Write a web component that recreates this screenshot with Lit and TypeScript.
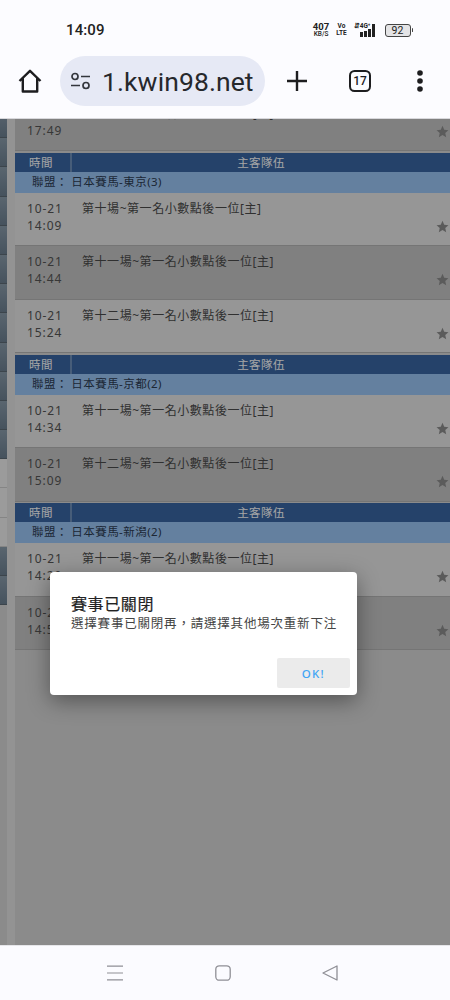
import { LitElement, html, css, svg } from "lit";
import { customElement } from "lit/decorators.js";

const FONT = `"Noto Sans", "Noto Sans CJK TC", sans-serif`;

const groups = [
  {
    league: "日本賽馬-東京(3)",
    rows: [
      ["10-21", "14:09", "第十場~第一名小數點後一位[主]"],
      ["10-21", "14:44", "第十一場~第一名小數點後一位[主]"],
      ["10-21", "15:24", "第十二場~第一名小數點後一位[主]"],
    ],
  },
  {
    league: "日本賽馬-京都(2)",
    rows: [
      ["10-21", "14:34", "第十一場~第一名小數點後一位[主]"],
      ["10-21", "15:09", "第十二場~第一名小數點後一位[主]"],
    ],
  },
  {
    league: "日本賽馬-新潟(2)",
    rows: [
      ["10-21", "14:29", "第十一場~第一名小數點後一位[主]"],
      ["10-21", "14:59", "第十二場~第一名小數點後一位[主]"],
    ],
  },
];

const sideKinds = [
  ...Array(12).fill("d"),
  ...Array(3).fill("l"),
  ...Array(2).fill("d"),
];

const star = svg`<svg class="star" viewBox="0 0 24 24" width="13" height="13"><path d="M12 1.5l3.2 7.2 7.8.8-5.9 5.2 1.7 7.7L12 18.4l-6.8 4 1.7-7.7L1 9.5l7.8-.8z" fill="currentColor"/></svg>`;

@customElement("app-root")
export class AppRoot extends LitElement {
  static styles = css`
    :host { display: block; width: 450px; height: 1000px; overflow: hidden; font-family: ${css([FONT] as any)}; background: #fcfcff; }
    .screen { display: flex; flex-direction: column; height: 1000px; }
    .status { height: 44px; flex: none; display: flex; align-items: center; padding: 16px 37px 0 66px; box-sizing: border-box; justify-content: space-between; color: #222; background: #fcfcff; position: relative; z-index: 3; }
    .time { font: 500 15px Roboto, sans-serif; letter-spacing: .1px; }
    .sicons { display: flex; align-items: center; gap: 7px; }
    .speed { display: flex; flex-direction: column; align-items: center; font: 700 9.5px/8px Roboto, sans-serif; }
    .speed small { font: 500 6.5px/6px Roboto, sans-serif; }
    .volte { display: flex; flex-direction: column; align-items: center; font: 700 6.5px/7px Roboto, sans-serif; }
    .net { display: flex; align-items: flex-end; height: 14px; gap: 1.5px; }
    .net span { font: 700 6.5px/7px Roboto, sans-serif; align-self: flex-start; margin-right: -12px; margin-left: 0; white-space: nowrap; }
    .net i { display: block; width: 2.5px; background: #222; }
    .batt { display: flex; align-items: center; gap: 1px; margin-left: 3px; }
    .batt b { display: flex; align-items: center; justify-content: center; width: 26px; height: 13px; box-sizing: border-box; border: 1px solid #444; border-radius: 3px; background: #e4e4e6; font: 400 10.5px Roboto, sans-serif; color: #222; }
    .batt u { display: block; width: 1.5px; height: 4px; background: #444; border-radius: 1px; }

    .bar { height: 75px; flex: none; display: flex; align-items: center; box-sizing: border-box; padding-bottom: 0; background: #fcfcff; border-bottom: 1px solid #d8d8dc; position: relative; z-index: 3; color: #1d1d1f; }
    .home { width: 60px; display: flex; justify-content: center; }
    .pill { width: 205px; height: 50px; border-radius: 25px; background: #e6e9f5; display: flex; align-items: center; padding-left: 10px; box-sizing: border-box; gap: 11px; margin-top: 0; }
    .url { font: 400 26.5px Roboto, sans-serif; color: #26282c; letter-spacing: .1px; white-space: nowrap; }
    .plus { width: 66px; margin-left: -1px; display: flex; justify-content: center; }
    .tabs { width: 60px; display: flex; justify-content: center; }
    .tabbox { width: 22px; height: 22px; border: 2.2px solid #1d1d1f; border-radius: 5.5px; box-sizing: border-box; display: flex; align-items: center; justify-content: center; font: 500 12px Roboto, sans-serif; }
    .dots { width: 60px; display: flex; justify-content: center; }

    .page { flex: 1; position: relative; overflow: hidden; background: #d6d6d6; display: flex; min-height: 0; }
    .side { width: 7px; flex: none; margin-top: -10px; display: flex; flex-direction: column; }
    .side div { height: 29.2px; box-sizing: border-box; border-bottom: 1px solid #5c6a76; flex: none; }
    .side .d { background: linear-gradient(#8a9cab, #6c7f90); }
    .side .l { background: #efefef; border-bottom-color: #ccc; }
    .gutter { width: 8px; flex: none; background: #e2e2e2; height: 100%; }
    .main { flex: 1; min-width: 0; margin-top: -21.5px; display: flex; flex-direction: column; gap: 1.5px; }
    .group { display: flex; flex-direction: column; }
    .head { height: 19px; display: flex; background: #3a66a3; color: #fff; font-size: 11.5px; line-height: 19px; letter-spacing: .4px; text-align: center; }
    .head .t { width: 57px; box-sizing: border-box; border-right: 2px solid #6d8fbb; padding-right: 3px; }
    .head .m { flex: 1; padding-right: 0; }
    .league { height: 21px; box-sizing: border-box; background: #9ac5f5; color: #2d3c52; font-size: 11.5px; line-height: 20px; padding-left: 17px; letter-spacing: .45px; white-space: nowrap; }
    .row { height: 53.5px; box-sizing: border-box; position: relative; display: flex; padding: 7px 0 0 12px; color: #555; font-size: 12px; line-height: 17px; letter-spacing: .9px; border-bottom: 1px solid #b4b4b4; white-space: nowrap; }
    .row.even { background: #e6e6e6; }
    .row.odd { background: #c5c5c5; }
    .when { width: 55px; flex: none; }
    .title { letter-spacing: .55px; color: #4a4a4a; }
    .star { position: absolute; right: 1.5px; top: 27px; color: #8d8d8d; }

    .scrim { position: absolute; inset: 0; background: rgba(0,0,0,.35); padding: 453px 0 0 50px; box-sizing: border-box; }
    .dialog { width: 307px; height: 123px; box-sizing: border-box; background: #fff; border-radius: 4px; box-shadow: 0 6px 22px rgba(0,0,0,.4); padding: 21px 7px 7px 21px; display: flex; flex-direction: column; }
    .dialog h2 { margin: 0; font-size: 16px; line-height: 22px; font-weight: 400; color: #222; letter-spacing: .6px; -webkit-text-stroke: .2px #222; }
    .dialog p { margin: 0; font-size: 12.5px; line-height: 18px; color: #444; letter-spacing: .8px; white-space: nowrap; }
    .actions { margin-top: auto; display: flex; justify-content: flex-end; }
    .ok { width: 73.5px; height: 30px; border: none; border-radius: 2px; background: #ebebeb; color: #42a5f5; font: 500 11.5px ${css([FONT] as any)}; letter-spacing: 1.2px; padding: 0; }

    .nav { height: 55px; flex: none; background: #fbfbff; border-top: 1px solid #e6e6ea; box-sizing: border-box; display: flex; align-items: center; position: relative; z-index: 3; padding: 0 0 0 107px; gap: 0; }
    .nav svg { display: block; }
  `;

  private row(r: string[], i: number) {
    return html`<div class="row ${i % 2 ? "odd" : "even"}">
      <div class="when">${r[0]}<br />${r[1]}</div>
      <div class="title">${r[2]}</div>
      ${star}
    </div>`;
  }

  render() {
    return html`<div class="screen">
      <div class="status">
        <span class="time">14:09</span>
        <div class="sicons">
          <div class="speed">407<small>KB/S</small></div>
          <div class="volte"><span>Vo</span><span>LTE</span></div>
          <div class="net">
            <span>⇵4G⁺</span>
            <i style="height:5px"></i><i style="height:6px"></i><i style="height:8px"></i><i style="height:13px"></i>
          </div>
          <div class="batt"><b>92</b><u></u></div>
        </div>
      </div>
      <div class="bar">
        <div class="home">
          <svg width="26" height="26" viewBox="0 0 26 26" fill="none" stroke="#1d1d1f" stroke-width="2.4" stroke-linejoin="round"><path d="M2.5 13L13 2.8 23.5 13M5.8 10.5V23.5H20.2V10.5"/></svg>
        </div>
        <div class="pill">
          <svg width="21" height="18" viewBox="0 0 21 18" fill="none" stroke="#33363c" stroke-width="1.7"><circle cx="5" cy="4.5" r="3"/><path d="M11 4.5h9M1 13.5h9"/><circle cx="16" cy="13.5" r="3"/></svg>
          <span class="url">1.kwin98.net</span>
        </div>
        <div class="plus">
          <svg width="22" height="22" viewBox="0 0 22 22" stroke="#1d1d1f" stroke-width="2.4"><path d="M11 1v20M1 11h20"/></svg>
        </div>
        <div class="tabs"><div class="tabbox">17</div></div>
        <div class="dots">
          <svg width="8" height="22" viewBox="0 0 8 22" fill="#1d1d1f"><circle cx="4" cy="3" r="2.8"/><circle cx="4" cy="11" r="2.8"/><circle cx="4" cy="19" r="2.8"/></svg>
        </div>
      </div>
      <div class="page">
        <div class="side">${sideKinds.map((k) => html`<div class=${k}></div>`)}</div>
        <div class="gutter"></div>
        <div class="main">
          ${this.row(["10-21", "17:49", "第十二場~第一名小數點後一位[主]"], 1)}
          ${groups.map(
            (g) => html`<div class="group">
              <div class="head"><div class="t">時間</div><div class="m">主客隊伍</div></div>
              <div class="league">聯盟： ${g.league}</div>
              ${g.rows.map((r, i) => this.row(r, i))}
            </div>`
          )}
        </div>
        <div class="scrim">
          <div class="dialog">
            <h2>賽事已關閉</h2>
            <p>選擇賽事已關閉再，請選擇其他場次重新下注</p>
            <div class="actions"><button class="ok">OK!</button></div>
          </div>
        </div>
      </div>
      <div class="nav">
        <svg width="16" height="16" viewBox="0 0 16 16" stroke="#8f8f96" stroke-width="1.2"><path d="M0 1.2h16M0 8h16M0 14.8h16"/></svg>
        <svg style="margin-left:92px" width="16" height="16" viewBox="0 0 16 16" fill="none" stroke="#8f8f96" stroke-width="1.3"><rect x=".8" y=".8" width="14.4" height="14.4" rx="3.5"/></svg>
        <svg style="margin-left:91px" width="16" height="16" viewBox="0 0 16 16" fill="none" stroke="#8f8f96" stroke-width="1.3" stroke-linejoin="round"><path d="M15 1L1 8l14 7z"/></svg>
      </div>
    </div>`;
  }
}
